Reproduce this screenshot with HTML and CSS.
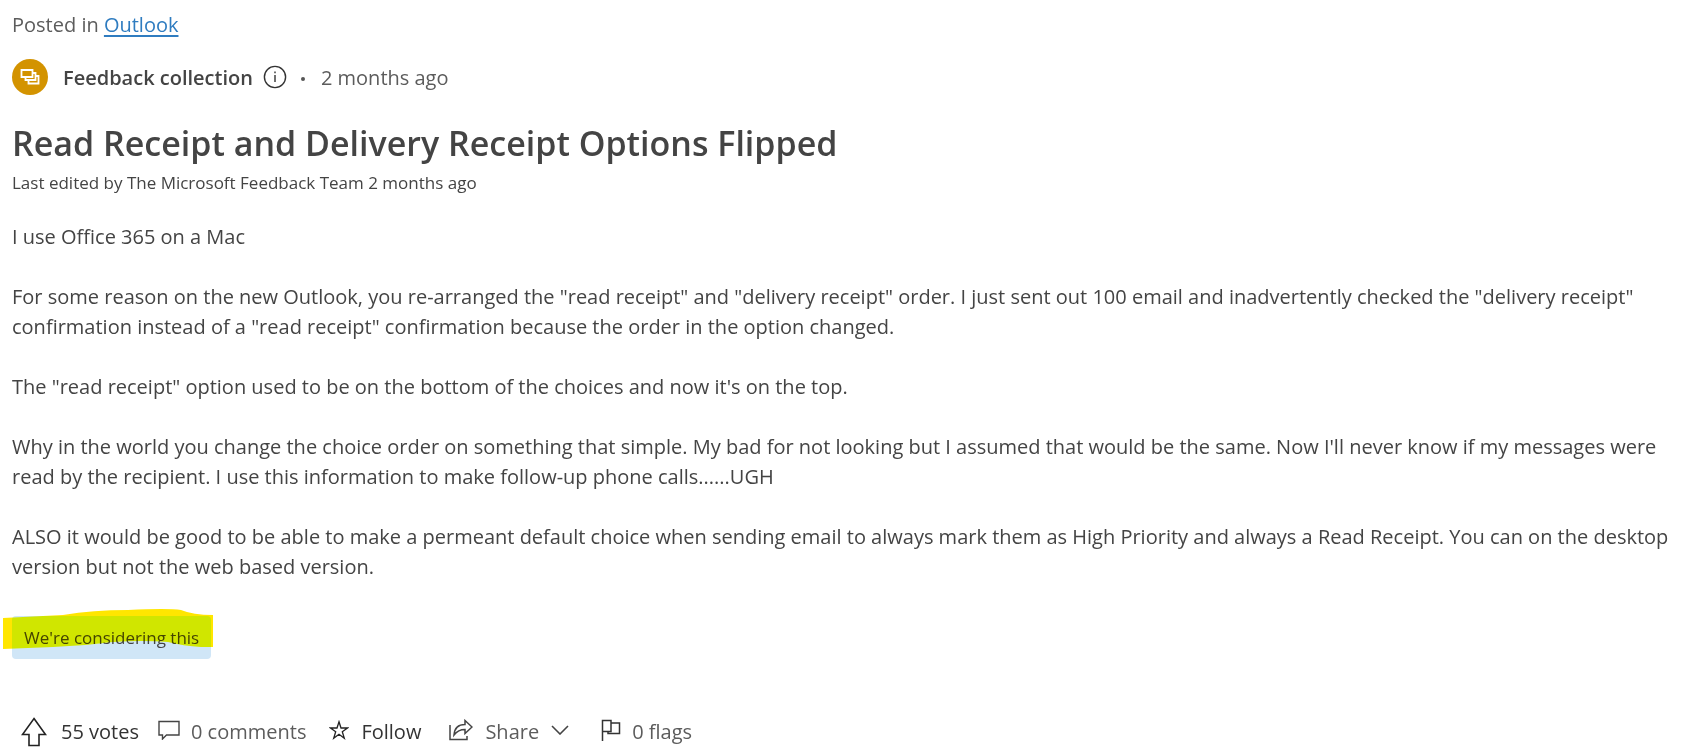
FILE: index.html
```html
<!DOCTYPE html>
<html lang="en">
<head>
<meta charset="utf-8">
<title>Read Receipt and Delivery Receipt Options Flipped</title>
<link rel="stylesheet" href="styles.css">
</head>
<body>
<main class="post">
  <p class="posted">Posted in <a class="posted-link" href="#outlook">Outlook</a></p>

  <div class="author">
    <span class="avatar">
      <svg width="20" height="20" viewBox="0 0 20 20" fill="none" stroke="#fff" stroke-width="1.8" aria-hidden="true">
        <path d="M1.500 3H12.500V10H1.500Z"/>
        <path d="M12.500 6H15.500V13H5.500V10"/>
        <path d="M15.500 9H18.500V16.500H8.500V13"/>
      </svg>
    </span>
    <strong class="author-name">Feedback collection</strong>
    <button class="info" type="button" aria-label="About feedback collection">
      <svg width="24" height="24" viewBox="0 0 24 24" fill="none" stroke="#333" stroke-width="1.4" aria-hidden="true">
        <circle cx="12" cy="12" r="10.6"/>
        <path d="M12 10V17M12 6.5V8.3"/>
      </svg>
    </button>
    <span class="dot"></span>
    <span class="age">2 months ago</span>
  </div>

  <h1 class="title">Read Receipt and Delivery Receipt Options Flipped</h1>
  <p class="edited">Last edited by The Microsoft Feedback Team 2 months ago</p>

  <div class="body">
    <p>I use Office 365 on a Mac</p>
    <p>For some reason on the new Outlook, you re-arranged the "read receipt" and "delivery receipt" order. I just sent out 100 email and inadvertently checked the "delivery receipt" confirmation instead of a "read receipt" confirmation because the order in the option changed.</p>
    <p>The "read receipt" option used to be on the bottom of the choices and now it's on the top.</p>
    <p>Why in the world you change the choice order on something that simple. My bad for not looking but I assumed that would be the same. Now I'll never know if my messages were read by the recipient. I use this information to make follow-up phone calls......UGH</p>
    <p>ALSO it would be good to be able to make a permeant default choice when sending email to always mark them as High Priority and always a Read Receipt. You can on the desktop version but not the web based version.</p>
  </div>

  <div class="status">
    <span class="status-text">We're considering this</span>
    <svg class="marker" width="210" height="42" viewBox="0 0 210 42" aria-hidden="true">
      <path fill="#ffe600" d="M0 9L60 6Q90 1 125 1Q165 -1 178 1Q190 6 210 6V38L198 38Q180 37 165 33Q140 31 110 33Q80 37 50 38L0 40Z"/>
    </svg>
  </div>

  <div class="actions">
    <button class="action vote" type="button">
      <svg width="26" height="30" viewBox="0 0 26 30" fill="none" stroke="#222" stroke-width="1.6" aria-hidden="true">
        <path d="M13 1.5L24.5 17.5H18V28.5H8V17.5H1.5Z"/>
      </svg>
      55 votes
    </button>
    <button class="action comments" type="button">
      <svg class="raised" width="22" height="20" viewBox="0 0 22 20" fill="none" stroke="#444" stroke-width="1.4" aria-hidden="true">
        <path d="M1 1.5H21V15H8.500L4.500 19V15H1Z"/>
      </svg>
      0 comments
    </button>
    <button class="action follow" type="button">
      <svg class="raised" width="20" height="20" viewBox="0 0 20 20" fill="none" stroke="#222" stroke-width="1.3" aria-hidden="true">
        <path d="M10 1.800L12 8H18.500L13.300 11.800L15.300 18.200L10 14.300L4.700 18.200L6.700 11.800L1.500 8H8Z"/>
      </svg>
      Follow
    </button>
    <button class="action share" type="button">
      <svg class="raised" width="24" height="22" viewBox="0 0 24 22" fill="none" stroke="#444" stroke-width="1.5" aria-hidden="true">
        <path d="M1 6V20.500H18V17"/>
        <path d="M16 1.500L23 8L16 14.500V10.500C11 10.500 8 12 5 16C5.500 9.500 9.500 5.500 16 5.500Z"/>
      </svg>
      Share
      <svg class="raised" width="18" height="10" viewBox="0 0 18 10" fill="none" stroke="#444" stroke-width="1.6" aria-hidden="true">
        <path d="M1 1L9 9L17 1"/>
      </svg>
    </button>
    <button class="action flags" type="button">
      <svg class="raised" width="20" height="22" viewBox="0 0 20 22" fill="none" stroke="#333" stroke-width="1.5" aria-hidden="true">
        <path d="M1.500 22V1.500H10V12.500H1.500M10 4H18.500V14.500H7V12.500"/>
      </svg>
      0 flags
    </button>
  </div>
</main>
</body>
</html>
```
FILE: styles.css
```css
* { box-sizing: border-box; }

body {
  margin: 0;
  background: #fff;
  color: #444;
  font-family: "Open Sans", "Noto Sans", sans-serif;
  font-size: 20px;
  line-height: 30px;
}

p, h1 { margin: 0; }

button {
  padding: 0;
  border: 0;
  background: none;
  color: inherit;
  font: inherit;
  cursor: pointer;
}

svg { display: block; flex: none; }

.post { padding: 10px 12px 0; }

.posted { color: #5c5c5c; }

.posted-link {
  color: #2f7cc0;
  text-decoration-thickness: 2px;
  text-underline-offset: 3px;
}

.author {
  display: flex;
  align-items: center;
  margin-top: 19px;
}

.avatar {
  display: flex;
  align-items: center;
  justify-content: center;
  width: 36px;
  height: 36px;
  margin-right: 15px;
  border-radius: 50%;
  background: #d39300;
}

.author-name { padding-top: 2px; font-weight: 600; }

.info { margin: 0 14px 0 10px; }

.dot {
  width: 4px;
  height: 4px;
  margin: 4px 16px 0 0;
  border-radius: 50%;
  background: #555;
}

.age { padding-top: 2px; color: #5c5c5c; }

.title {
  margin-top: 24px;
  font-size: 34px;
  line-height: 48px;
  font-weight: 600;
}

.edited {
  margin-top: 4px;
  font-size: 17px;
  line-height: 24px;
}

.body {
  display: flex;
  flex-direction: column;
  gap: 30px;
  margin-top: 27px;
}

.status {
  position: relative;
  width: fit-content;
  margin-top: 34px;
  padding: 10px 12px 9px;
  border-radius: 4px;
  background: #d0e6f7;
  font-size: 17px;
  line-height: 24px;
}

.marker {
  position: absolute;
  top: -7px;
  left: -9px;
  mix-blend-mode: darken;
}

.actions {
  display: flex;
  align-items: center;
  margin-top: 58px;
  padding-left: 9px;
}

.action {
  display: flex;
  align-items: center;
  gap: 11px;
}

.raised { margin-bottom: 4px; }

.vote, .follow { color: #333; }

.comments, .share, .flags { color: #5c5c5c; }

.vote { gap: 14px; margin-right: 19px; }
.comments { margin-right: 23px; }
.follow { gap: 12px; margin-right: 28px; }
.share { gap: 12px; margin-right: 32px; }
```
